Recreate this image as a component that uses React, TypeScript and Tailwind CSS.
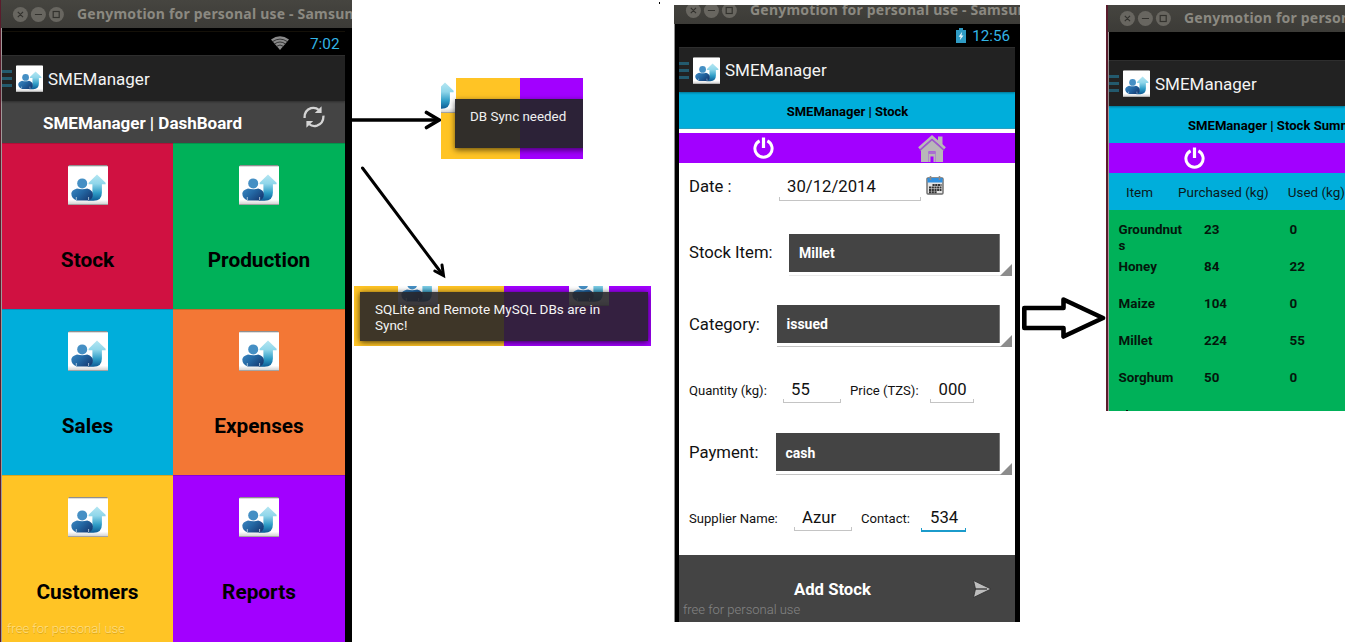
import { useId, type ReactNode } from 'react';

function Logo({ className }: { className: string }) {
  const id = useId().replace(/[^a-zA-Z0-9]/g, '');
  return (
    <svg viewBox="0 0 40 40" className={`block shrink-0 ${className}`}>
      <defs>
        <linearGradient id={`${id}a`} x1="0" y1="0" x2="0" y2="1">
          <stop offset="0" stopColor="#b4e6f2" />
          <stop offset="0.35" stopColor="#8fd6ea" />
          <stop offset="0.7" stopColor="#2e9cc6" />
          <stop offset="1" stopColor="#0d5a94" />
        </linearGradient>
        <linearGradient id={`${id}b`} x1="0" y1="0" x2="1" y2="0.6">
          <stop offset="0" stopColor="#3b86c0" />
          <stop offset="0.5" stopColor="#2468a4" />
          <stop offset="1" stopColor="#173f78" />
        </linearGradient>
        <linearGradient id={`${id}c`} x1="0" y1="0" x2="0" y2="1">
          <stop offset="0" stopColor="#fff" />
          <stop offset="0.88" stopColor="#fff" />
          <stop offset="1" stopColor="#d2d2d2" />
        </linearGradient>
      </defs>
      <path d="M1 0H39L40 2V40H0V2Z" fill="#8f8f8f" />
      <rect y="1.3" width="40" height="38" fill={`url(#${id}c)`} />
      <path
        d="M29 9.6L37.6 17.8V19.2H33.9V27.5Q33.9 35.8 25.5 35.8H19.5Q25 33.5 24.4 27V19.2H20.6V17.8Z"
        fill={`url(#${id}a)`}
      />
      <path
        d="M9 23.4Q14.3 25 19.2 23.4Q25 25.2 24.9 29.5Q24.6 34.5 20.5 35.4H8.6Q3.4 33.6 3.3 28.6Q3.5 25 9 23.4Z"
        fill={`url(#${id}b)`}
      />
      <path d="M8.3 32V35M20.6 32V35" stroke="#dcecf5" strokeWidth="0.7" />
      <circle cx="14.2" cy="18.4" r="5" fill="#458fc4" />
    </svg>
  );
}

function PowerIcon({ className }: { className: string }) {
  return (
    <svg viewBox="0 0 21 22" fill="none" stroke="#fff" className={`block shrink-0 ${className}`}>
      <path d="M6.6 3.9A8.6 8.6 0 1 0 14.4 3.9" strokeWidth="3" />
      <path d="M10.5 0.5V11" strokeWidth="3.2" />
    </svg>
  );
}

function TitleBar({ shift, pad }: { shift: string; pad: string }) {
  return (
    <div className={`flex h-[28px] items-center overflow-hidden bg-gradient-to-b from-[#464540] to-[#3c3b37] ${shift} ${pad}`}>
      <svg viewBox="0 0 54 18" className="block h-[18px] w-[54px] shrink-0">
        {[8, 26, 44].map((cx) => (
          <circle key={cx} cx={cx + 0.4} cy="9.5" r="7.5" fill="#686660" />
        ))}
        <g stroke="#33322e" fill="none" strokeWidth="1.2">
          <path d="M5.8 6.9L11 12.1M11 6.9L5.8 12.1M22.9 9.5H30" />
          <rect x="41.2" y="6.5" width="6" height="6" />
        </g>
      </svg>
      <span className="ml-[11px] whitespace-nowrap font-['Noto_Sans',sans-serif] text-[14px] font-bold leading-[20px] tracking-[0.2px] text-[#8b8981]">
        Genymotion for personal use - Samsun
      </span>
    </div>
  );
}

function ActionBar({ height, gap }: { height: string; gap: string }) {
  return (
    <div className={`flex items-center border-t border-[#2e2e2e] bg-[#222] shadow-[0_1px_2px_rgba(0,0,0,0.35)] ${height} relative`}>
      <div className="flex w-[10px] flex-col gap-[4px]">
        <i className="block h-[3px] bg-[#235a6e]" />
        <i className="block h-[3px] bg-[#235a6e]" />
        <i className="block h-[3px] bg-[#235a6e]" />
      </div>
      <Logo className={`h-[27px] w-[27px] ${gap}`} />
      <span className="ml-[5px] text-[17px] leading-[20px] text-[#f4f4f4]">SMEManager</span>
    </div>
  );
}

const tiles = [
  { name: 'Stock', bg: 'bg-[#d01141]' },
  { name: 'Production', bg: 'bg-[#00b159]' },
  { name: 'Sales', bg: 'bg-[#00aedb]' },
  { name: 'Expenses', bg: 'bg-[#f37735]' },
  { name: 'Customers', bg: 'bg-[#ffc425]' },
  { name: 'Reports', bg: 'bg-[#a200ff]' },
];

function Dashboard() {
  return (
    <section className="flex h-[642px] w-[352px] shrink-0 flex-col overflow-hidden border-l border-[#5a1c2c] bg-black">
      <TitleBar shift="shrink-0" pad="pl-[11px]" />
      <div className="flex flex-1 border-l border-[#a09a9a]">
        <div className="flex w-[343px] flex-col">
          <div className="h-[4px] border-b border-[#141008]" />
          <div className="flex h-[23px] items-start justify-end pr-[5.5px]">
            <svg viewBox="0 0 18 14" className="mt-[4px] h-[14px] w-[18px]">
              <path d="M0 3.4Q9 -3 18 3.4L9 14Z" fill="#8a8a8a" />
              <path d="M1.6 5.6Q9 0.6 16.4 5.6M3.4 8Q9 4 14.6 8M5.4 10.4Q9 7.6 12.6 10.4" fill="none" stroke="#1c1c1c" strokeWidth="0.8" />
            </svg>
            <span className="ml-[21px] mt-[2px] text-[15.3px] leading-[20px] text-[#33b5e5]">7:02</span>
          </div>
          <ActionBar height="h-[46px]" gap="ml-[4px]" />
          <div className="flex h-[42px] items-start bg-[#444] pl-[41px]">
            <span className="mt-[12px] w-[200px] whitespace-nowrap text-[17px] font-bold leading-[20px] text-white">
              SMEManager | DashBoard
            </span>
            <svg viewBox="0 0 22 22" className="ml-[60px] mt-[5px] h-[22px] w-[22px]" fill="none" stroke="#d4d4d4" strokeWidth="2.3">
              <path d="M1.6 12Q1.3 4.5 8 2.2Q12.5 1 16 4" />
              <path d="M20.4 9.6Q20.8 17 14 19.6Q9.5 21 6 18" />
              <path d="M18.6 0.2V7H11.8ZM3.4 21.8V15H10.2Z" fill="#d4d4d4" stroke="none" />
            </svg>
          </div>
          <div className="grid h-[499px] grid-cols-[171px_172px] grid-rows-[166px_166px_167px]">
            {tiles.map((t) => (
              <div key={t.name} className={`flex flex-col items-center border-t border-black/15 pt-[21px] ${t.bg}`}>
                <Logo className="h-[40px] w-[40px]" />
                <span className="mt-[43px] text-[20.8px] font-bold leading-[24px] text-black">{t.name}</span>
                {t.name === 'Customers' && (
                  <span className="mt-[16px] self-start whitespace-nowrap pl-[5px] text-[13.1px] font-light leading-[18px] text-[#ffdf85] [text-shadow:0_1px_0_#dba71c]">
                    free for personal use
                  </span>
                )}
              </div>
            ))}
          </div>
        </div>
      </div>
    </section>
  );
}

function SyncNotes() {
  return (
    <section className="flex w-[322px] shrink-0 flex-col">
      <div className="h-[78px] pl-[307px] pt-[2px]">
        <i className="block h-[2px] w-[1px] bg-black" />
      </div>
      <div className="flex h-[81px]">
        <svg viewBox="0 0 89 81" className="h-[81px] w-[89px] shrink-0" fill="none" stroke="#000" strokeWidth="3.6" strokeLinecap="round">
          <path d="M0 42H86" strokeLinecap="butt" />
          <path d="M74.5 34.5L87 42L74.5 49.5" />
        </svg>
        <div className="relative flex w-[142px] overflow-hidden">
          <div className="w-[79px] bg-[#ffc425]" />
          <div className="w-[63px] bg-[#a200ff]" />
          <Logo className="absolute -left-[25px] -top-[5px] h-[40px] w-[40px]" />
          <div className="absolute left-[14px] top-[21px] h-[49px] w-[140px] bg-[rgba(36,36,42,0.94)] pl-[15px] pt-[5px] shadow-[0_2px_6px_rgba(0,0,0,0.6)]">
            <span className="whitespace-nowrap text-[13.4px] leading-[20px] text-[#f0f0f0]">DB Sync needed</span>
          </div>
        </div>
      </div>
      <svg viewBox="0 0 322 127" className="h-[127px] w-[322px]" fill="none" stroke="#000" strokeWidth="3" strokeLinecap="round">
        <path d="M10.500 9L90.500 115.500" />
        <path d="M82.800 112L91.500 116.500L90 106" />
      </svg>
      <div className="relative ml-[2px] flex h-[60px] w-[297px] overflow-hidden">
        <div className="w-[150px] bg-[#ffc425]" />
        <div className="w-[147px] bg-[#a200ff]" />
        <Logo className="absolute left-[44px] -top-[20px] h-[40px] w-[40px]" />
        <Logo className="absolute left-[215px] -top-[20px] h-[40px] w-[40px]" />
        <div className="absolute left-[6px] top-[6px] h-[49px] w-[288px] bg-[rgba(38,36,40,0.89)] pl-[15px] pt-[10px] text-[13.5px] leading-[15.5px] text-[#f4f4f4] shadow-[0_1px_6px_rgba(0,0,0,0.75)]">
          SQLite and Remote MySQL DBs are in
          <br />
          Sync!
        </div>
      </div>
    </section>
  );
}

function Field({ className, line = 'border-[#c4c4c4] border-b', children }: { className: string; line?: string; children: ReactNode }) {
  return (
    <div className={`flex shrink-0 flex-col justify-between ${className}`}>
      <span className="whitespace-nowrap text-[16.7px] leading-[20px] text-[#111]">{children}</span>
      <i className={`-mt-[2px] block h-[4px] border-x ${line}`} />
    </div>
  );
}

function Picker({ className, box, line, children }: { className: string; box: string; line: string; children: ReactNode }) {
  return (
    <div className={`flex h-[42px] border-b ${line} ${className}`}>
      <div className={`flex h-[38px] items-center border-r border-[#777] bg-[#444] text-[14px] font-bold text-white ${box}`}>{children}</div>
      <svg viewBox="0 0 12 12" className="-mb-[1px] h-[12px] w-[12px] shrink-0 self-end">
        <path d="M12 0V12H0Z" fill="#8c8c8c" />
      </svg>
    </div>
  );
}

const big = 'shrink-0 whitespace-nowrap text-[16.7px] leading-[20px] text-[#111]';
const small = 'shrink-0 whitespace-nowrap text-[13.1px] leading-[20px] text-[#111]';

function StockForm() {
  return (
    <section className="mt-[5px] flex h-[617px] w-[346px] shrink-0 flex-col overflow-hidden bg-black">
      <TitleBar shift="-mt-[9px] shrink-0" pad="pl-[11px]" />
      <div className="flex flex-1 border-l border-[#8f8f8f] pl-[4px]">
        <div className="flex w-[336px] flex-col">
          <div className="flex h-[23px] items-start justify-end pr-[5px]">
            <svg viewBox="0 0 10 15" className="mt-[4px] h-[15px] w-[10px]">
              <path d="M3 0H7V2H10V15H0V2H3Z" fill="#2f9bc4" />
              <path d="M6.200 3.800L2.600 8.800H4.600L3.800 12.200L7.500 7.400H5.400Z" fill="#e8f6fb" />
            </svg>
            <span className="ml-[6px] mt-[2px] text-[15.2px] leading-[20px] text-[#33b5e5]">12:56</span>
          </div>
          <ActionBar height="h-[45px]" gap="ml-[4px]" />
          <div className="flex h-[37px] items-center justify-center border-b border-[#2c9fc0] bg-[#00aedb] pl-[1px] pt-[3px] text-[13px] font-bold text-black">
            SMEManager | Stock
          </div>
          <div className="flex h-[34px] border-t-[4px] border-white bg-[#a200ff]">
            <PowerIcon className="ml-[74px] mt-[4px] h-[22px] w-[21px]" />
            <svg viewBox="0 0 28 27" className="ml-[144px] mt-[2px] h-[27px] w-[28px]">
              <path d="M20 1.500H24.500V11L20 7Z" fill="#b8b8b8" />
              <path d="M3 14V27H10.500V16.500H17.500V27H25V14L14 4.500Z" fill="#b8b8b8" />
              <path d="M10.500 17.500H17.500V27H15.500V21.500H12.500V27H10.500Z" fill="#b8b8b8" />
              <path d="M10.500 16.500H17.500V19H10.500Z" fill="#a970d0" />
              <path d="M2 15.500L14 4.800L26 15.500" fill="none" stroke="#9a62c4" strokeWidth="1.200" />
              <path d="M1 13.200L14 1.800L27 13.200" fill="none" stroke="#b8b8b8" strokeWidth="2.600" />
            </svg>
          </div>
          <div className="flex h-[392px] flex-col bg-white pl-[10px]">
            <div className="flex h-[54px] items-start">
              <span className={`mt-[14px] w-[90px] ${big}`}>Date :</span>
              <Field className="mt-[14px] h-[24px] w-[142px] [&>span]:pl-[8px]">30/12/2014</Field>
              <svg viewBox="0 0 18 19" className="ml-[5px] mt-[13px] h-[19px] w-[18px]">
                <rect x="1" y="2" width="16" height="16" rx="1" fill="#e4e4e4" stroke="#6a6a6a" strokeWidth="1.400" />
                <rect x="1.500" y="2" width="15" height="4.500" fill="#2f90e0" />
                <path d="M4.500 0V4M13.500 0V4" stroke="#8a8a8a" strokeWidth="1.600" />
                <path d="M6.500 9H15.500M3 11.500H15.500M3 14H15.500M3 16.300H11" stroke="#333" strokeWidth="1.900" strokeDasharray="2.200 0.500" />
              </svg>
            </div>
            <div className="flex h-[71px] items-start">
              <span className={`mt-[26px] w-[100px] ${big}`}>Stock Item:</span>
              <Picker className="mt-[17px]" box="w-[211px] pl-[10px]" line="border-[#eaeaea]">Millet</Picker>
            </div>
            <div className="flex h-[72px] items-start">
              <span className={`mt-[27px] w-[88px] ${big}`}>Category:</span>
              <Picker className="mt-[17px]" box="w-[223px] pl-[9.500px] pt-[1px]" line="border-[#c4c4c4]">issued</Picker>
            </div>
            <div className="flex h-[57px] items-start">
              <span className={`mt-[20.500px] w-[94px] ${small}`}>Quantity (kg):</span>
              <Field className="mt-[20px] h-[23px] w-[58px] [&>span]:pl-[8px]">55</Field>
              <span className={`ml-[9px] mt-[20.500px] w-[80px] ${small}`}>Price (TZS):</span>
              <Field className="mt-[20px] h-[23px] w-[44px] [&>span]:pl-[8.500px]">000</Field>
            </div>
            <div className="flex h-[70px] items-start">
              <span className={`mt-[26px] w-[87px] ${big}`}>Payment:</span>
              <Picker className="mt-[16px]" box="w-[224px] pl-[9.500px] pt-[2px]" line="border-[#c4c4c4]">cash</Picker>
            </div>
            <div className="flex h-[68px] items-start">
              <span className={`mt-[21.500px] w-[105px] ${small}`}>Supplier Name:</span>
              <Field className="mt-[21px] h-[23px] w-[58px] [&>span]:pl-[8px]">Azur</Field>
              <span className={`ml-[9px] mt-[21.500px] w-[60px] ${small}`}>Contact:</span>
              <Field className="mt-[21px] h-[24px] w-[45px] [&>span]:pl-[9px]" line="border-[#1b9bcb] border-b-2">534</Field>
            </div>
          </div>
          <div className="flex h-[67px] flex-col bg-[#444]">
            <div className="flex h-[46px] items-start pl-[115px]">
              <span className="mt-[25px] w-[179px] text-[16.700px] font-bold leading-[20px] text-white">Add Stock</span>
              <svg viewBox="0 0 19 18" className="mt-[25px] h-[18px] w-[19px]">
                <path d="M0.500 0.500L18 9L0.500 17.500L2.500 9Z" fill="#bdbdbd" stroke="#2e2e2e" strokeWidth="0.800" />
                <path d="M2 9H14" stroke="#333" strokeWidth="1.300" />
              </svg>
            </div>
            <span className="pl-[4px] text-[13px] font-light leading-[18px] text-[#858585]">free for personal use</span>
          </div>
        </div>
      </div>
    </section>
  );
}

const stock = [
  ['Groundnuts', '23', '0'],
  ['Honey', '84', '22'],
  ['Maize', '104', '0'],
  ['Millet', '224', '55'],
  ['Sorghum', '50', '0'],
];

function StockSummary() {
  return (
    <section className="mt-[5px] flex h-[406px] w-[239px] shrink-0 flex-col overflow-hidden border-l-2 border-[#5a1c2c] bg-black">
      <TitleBar shift="-mt-[1px] shrink-0" pad="pl-[11px]" />
      <div className="flex flex-1 flex-col border-l border-[#a09a9a]">
        <div className="h-[28px] shrink-0" />
        <ActionBar height="h-[46px] shrink-0" gap="ml-[4px]" />
        <div className="flex h-[37px] shrink-0 items-center overflow-hidden whitespace-nowrap bg-[#00aedb] pl-[79px] pt-[2px] text-[13.100px] font-bold text-black">
          SMEManager | Stock Summary
        </div>
        <div className="h-[30px] shrink-0 bg-[#a200ff] pl-[75px] pt-[4px]">
          <PowerIcon className="h-[22px] w-[21px]" />
        </div>
        <div className="flex h-[37px] shrink-0 items-center whitespace-nowrap bg-[#00aedb] pl-[17px] pt-[3px] text-[13.450px] text-[#0b1a20]">
          <span className="w-[52.500px]">Item</span>
          <span className="w-[110.500px]">Purchased (kg)</span>
          <span>Used (kg)</span>
        </div>
        <div className="flex flex-1 flex-col bg-[#00b159] pl-[9.500px] pt-[12px]">
          {stock.map((r) => (
            <div key={r[0]} className="grid h-[37px] shrink-0 grid-cols-[65px_65px_60px] gap-x-[20.500px] text-[13.400px] font-bold leading-[16px] text-[#04170c]">
              <span className="break-all">{r[0]}</span>
              <span>{r[1]}</span>
              <span>{r[2]}</span>
            </div>
          ))}
          <i className="ml-[7px] mt-[3px] block h-[1px] w-[2px] shrink-0 bg-[#04170c]" />
        </div>
      </div>
    </section>
  );
}

export default function App() {
  return (
    <main className="flex h-[642px] w-[1345px] items-start overflow-hidden bg-white font-[Roboto,sans-serif]">
      <Dashboard />
      <SyncNotes />
      <StockForm />
      <svg viewBox="0 0 86 46" className="mt-[294px] h-[46px] w-[86px] shrink-0" fill="#fff" stroke="#000" strokeWidth="4.600" strokeLinejoin="round">
        <path d="M4.300 14H43.500V5.500L83 24L43.500 42.500V34H4.300Z" />
      </svg>
      <StockSummary />
    </main>
  );
}
